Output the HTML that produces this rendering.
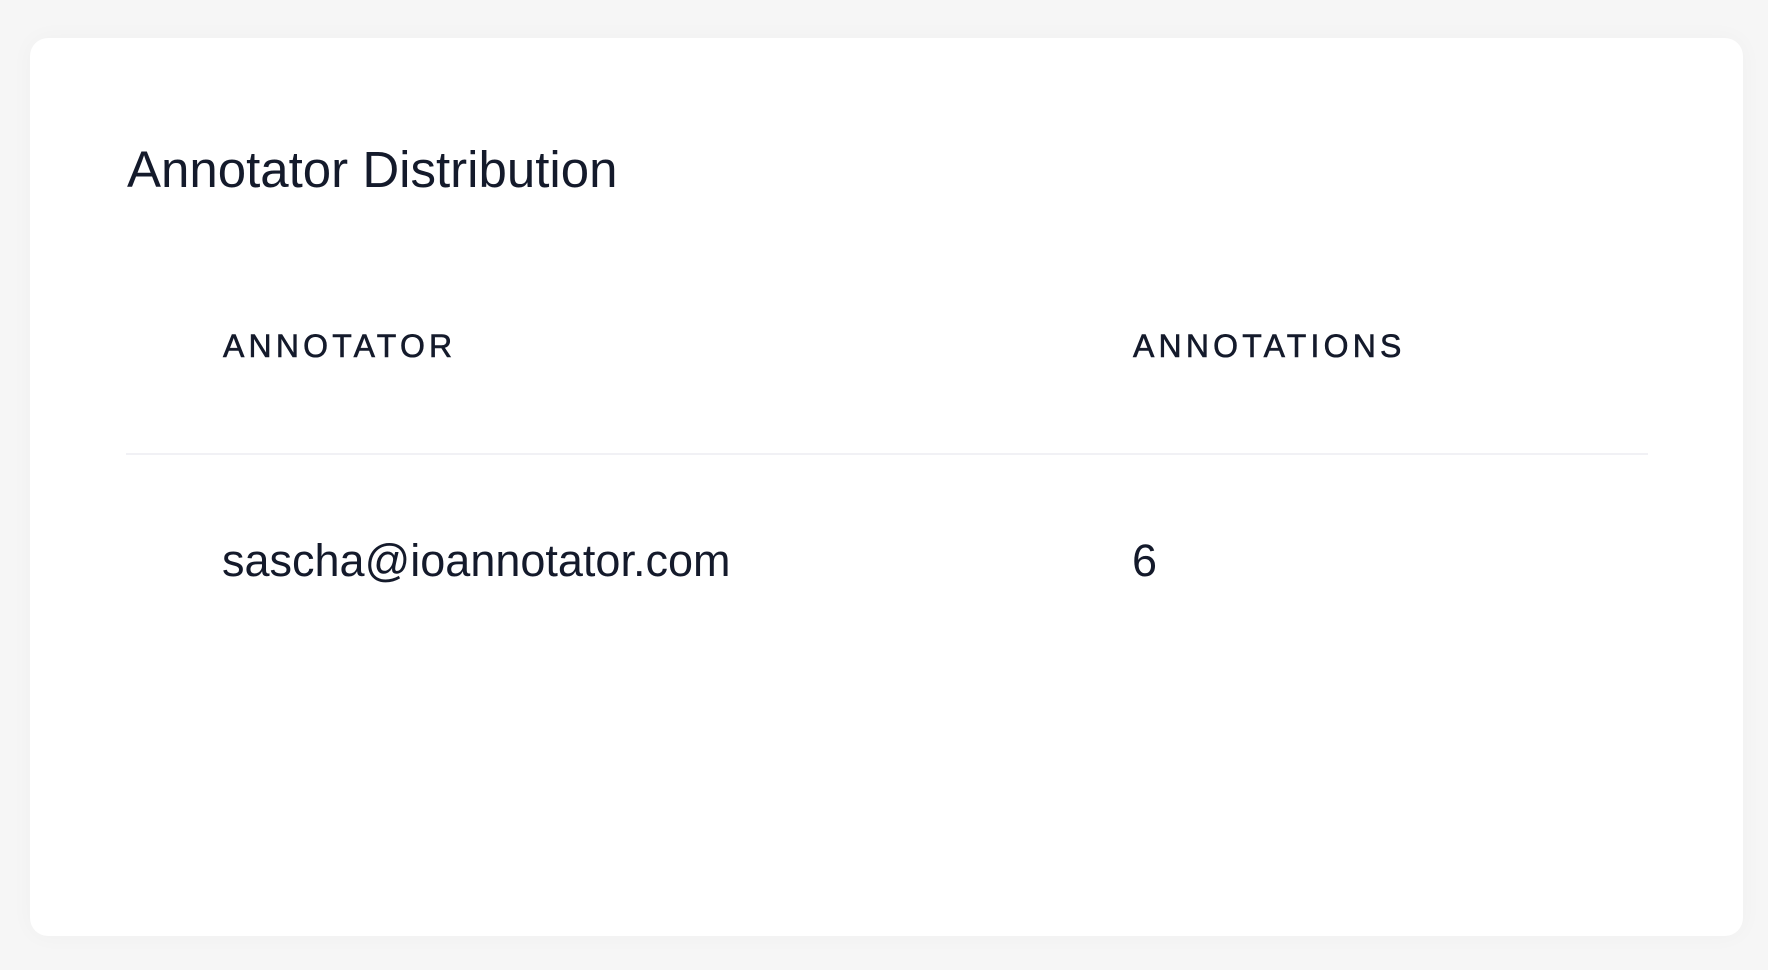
<!DOCTYPE html>
<html><head><style>
html,body{margin:0;padding:0;}
body{width:1768px;height:970px;background:#f6f6f6;font-family:"Liberation Sans",sans-serif;color:#141a2b;position:relative;overflow:hidden;}
.card{position:absolute;left:30px;top:38px;width:1713px;height:898px;background:#fff;border-radius:18px;box-shadow:0 0 24px rgba(0,0,0,0.03);}
.t{position:absolute;white-space:nowrap;}
.title{left:97px;top:100px;font-size:51px;line-height:64px;}
.h{font-size:32px;letter-spacing:4.2px;line-height:40px;top:288px;-webkit-text-stroke:0.6px #141a2b;}
.line{position:absolute;left:96px;top:415px;width:1522px;height:2px;background:#f1f1f5;}
.r{font-size:45px;line-height:52px;top:497px;}
</style></head><body>
<div class="card">
<div class="t title">Annotator Distribution</div>
<div class="t h" style="left:193px">ANNOTATOR</div>
<div class="t h" style="left:1103px">ANNOTATIONS</div>
<div class="line"></div>
<div class="t r" style="left:192px">sascha@ioannotator.com</div>
<div class="t r" style="left:1102px">6</div>
</div>
</body></html>
